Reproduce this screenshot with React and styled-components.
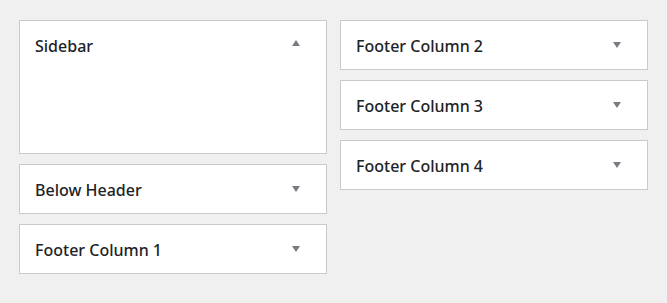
import React from 'react';
import styled, { createGlobalStyle } from 'styled-components';

const GlobalStyle = createGlobalStyle`
  html, body {
    margin: 0;
    padding: 0;
    background: #f0f0f1;
  }
  body {
    font-family: "Noto Sans", "Open Sans", sans-serif;
    color: #1d2327;
  }
`;

const Page = styled.div`
  display: flex;
  align-items: flex-start;
  gap: 13px;
  padding: 20px 0 0 19px;
  min-height: 303px;
  box-sizing: border-box;
`;

const Column = styled.div`
  display: flex;
  flex-direction: column;
  gap: 10px;
  width: 308px;
`;

const Area = styled.div`
  background: #fff;
  border: 1px solid #c8cacd;
  box-sizing: border-box;
  min-height: ${(p) => (p.open ? '134px' : '50px')};
`;

const Header = styled.div`
  display: flex;
  align-items: center;
  justify-content: space-between;
  height: 48px;
  padding: 0 26px 0 15px;
`;

const Title = styled.h2`
  margin: 0;
  padding-top: 2px;
  font-size: 16px;
  font-weight: 500;
  line-height: 1;
`;

const Arrow = styled.span`
  width: 0;
  height: 0;
  border-left: 4.5px solid transparent;
  border-right: 4.5px solid transparent;
  ${(p) =>
    p.up
      ? 'border-bottom: 6px solid #787c82; margin-top: -4px;'
      : 'border-top: 6px solid #787c82;'}
`;

const WidgetArea = ({ title, open }) => (
  <Area open={open}>
    <Header>
      <Title>{title}</Title>
      <Arrow up={open} />
    </Header>
  </Area>
);

const App = () => (
  <>
    <GlobalStyle />
    <Page>
      <Column>
        <WidgetArea title="Sidebar" open />
        <WidgetArea title="Below Header" />
        <WidgetArea title="Footer Column 1" />
      </Column>
      <Column>
        <WidgetArea title="Footer Column 2" />
        <WidgetArea title="Footer Column 3" />
        <WidgetArea title="Footer Column 4" />
      </Column>
    </Page>
  </>
);

export default App;
